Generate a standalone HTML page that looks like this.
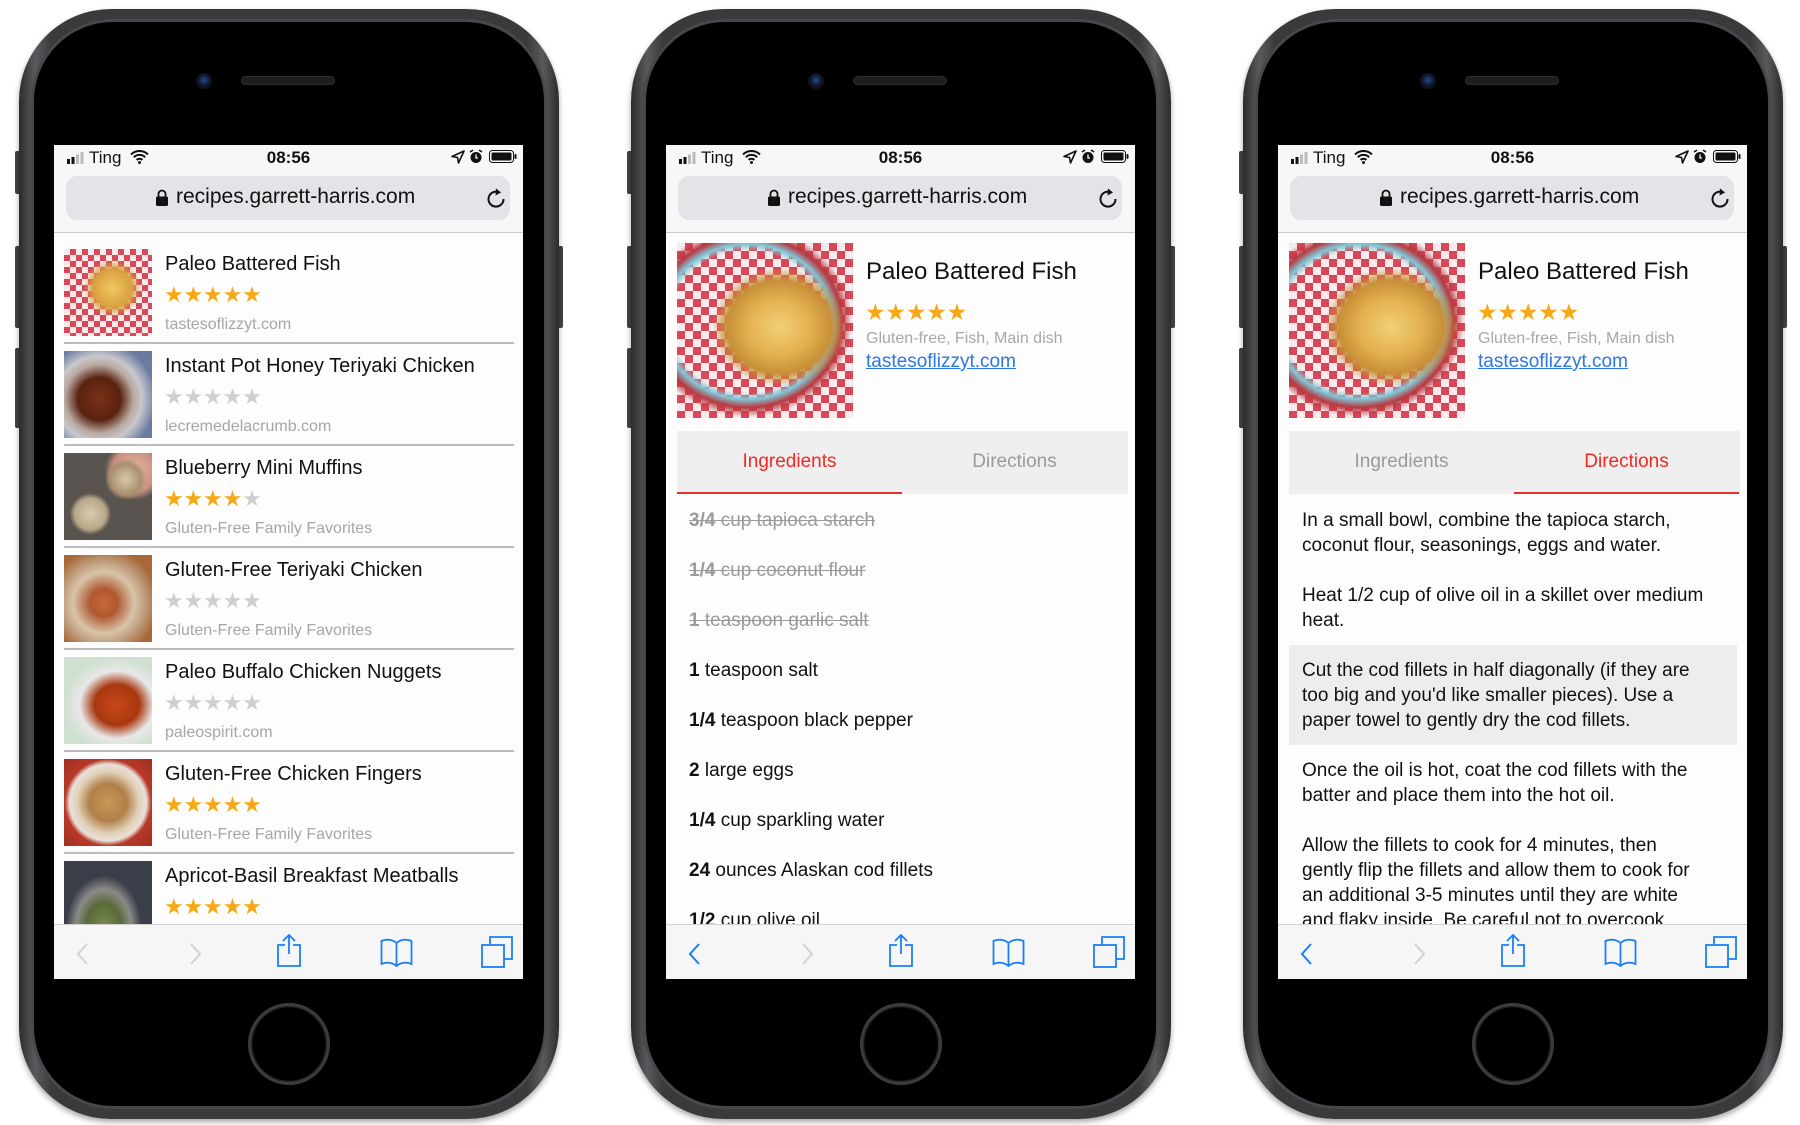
<!DOCTYPE html>
<html><head><meta charset="utf-8">
<style>
*{margin:0;padding:0;box-sizing:border-box}
body{width:1800px;height:1125px;background:#fff;position:relative;overflow:hidden;font-family:"Liberation Sans",Arial,sans-serif}
.phone{position:absolute;top:9px;width:540px;height:1110px}
.body{position:absolute;left:0;top:0;width:540px;height:1110px;border-radius:92px;background:linear-gradient(90deg,#2c2c2e,#5a5a5e 3%,#3a3a3c 6%,#3a3a3c 94%,#5a5a5e 97%,#2c2c2e);box-shadow:0 3px 6px rgba(0,0,0,.35)}
.bez{position:absolute;left:12px;top:10px;width:516px;height:1090px;border-radius:82px;background:#000;border:3px solid #48484c}
.btn{position:absolute;left:-4px;width:6px;background:#444;border-radius:2px}
.btnr{position:absolute;right:-4px;width:6px;background:#444;border-radius:2px}
.cam{position:absolute;left:177px;top:64px;width:16px;height:16px;border-radius:50%;background:radial-gradient(circle at 50% 45%,#2a4a8a 0,#0e1830 45%,#111 70%)}
.spk{position:absolute;left:222px;top:67px;width:94px;height:9px;border-radius:5px;background:#1e1e1e;border:1px solid #2e2e2e}
.home{position:absolute;left:229px;top:994px;width:82px;height:82px;border-radius:50%;border:3px solid #3c3c3e;box-shadow:inset 0 0 2px #777}
.scr{position:absolute;left:35px;top:136px;width:469px;height:834px;background:#fdfdfd;overflow:hidden}
.sb{position:absolute;left:0;top:0;width:469px;height:88px;background:#f7f7f7;border-bottom:1px solid #c8c8c8}
.abs{position:absolute;white-space:nowrap}
.url{position:absolute;left:12px;top:31px;width:444px;height:44px;border-radius:11px;background:#e3e3e8}
.tb{position:absolute;left:0;top:779px;width:469px;height:55px;background:#f6f6f7;border-top:1px solid #d0d0d0}
.t{font-size:20px;color:#111}
.st{font-family:"DejaVu Sans",sans-serif;font-size:22px;letter-spacing:-0.2px;color:#f6a914}
.g{color:#cfcfcf}
.src{font-size:16px;color:#a6a6a6}
.th{position:absolute;left:10px;width:88px;height:87px}
.dv{position:absolute;left:10px;width:450px;height:2px;background:#bdbdbd}
.ing{position:absolute;left:23px;font-size:19px;color:#111;white-space:nowrap;line-height:24px}
.ing.s{color:#9a9a9a;text-decoration:line-through}
.dir{position:absolute;left:11px;width:448px;padding:12.5px 0 12.5px 13px;font-size:19px;line-height:25px;color:#111;white-space:nowrap}
.fish{position:absolute;left:11px;top:98px;width:176px;height:175px;background:radial-gradient(ellipse at 58% 48%,#f2d078 0,#e4b050 22%,#c89038 36%,transparent 46%),radial-gradient(ellipse at 40% 45%,transparent 52%,#80c8d8 57%,#b83840 63%,transparent 70%),repeating-conic-gradient(#d84858 0 25%,#f6eaea 0 50%) 0 0/16px 16px}
</style></head><body>

<!-- PHONE 1 -->
<div class="phone" style="left:19px">
 <div class="btn" style="top:142px;height:43px"></div>
 <div class="btn" style="top:237px;height:82px"></div>
 <div class="btn" style="top:339px;height:80px"></div>
 <div class="btnr" style="top:237px;height:82px"></div>
 <div class="body"></div><div class="bez"></div>
 <div class="cam"></div><div class="spk"></div><div class="home"></div>
 <div class="scr">
  <div class="sb">
   <svg class="abs" style="left:13px;top:7px" width="18" height="12"><rect x="0" y="7" width="3" height="5" fill="#111"/><rect x="4.5" y="5" width="3" height="7" fill="#111"/><rect x="9" y="2.5" width="3" height="9.5" fill="#bbb"/><rect x="13.5" y="0" width="3" height="12" fill="#bbb"/></svg>
   <div class="abs" style="left:35px;top:3px;font-size:17px;color:#111">Ting</div>
   <svg class="abs" style="left:76px;top:5px" width="19" height="14" viewBox="0 0 19 14"><path d="M1 4.5a12 12 0 0 1 17 0M3.8 7.3a8 8 0 0 1 11.4 0M6.6 10a4 4 0 0 1 5.8 0" stroke="#111" stroke-width="2" fill="none"/><circle cx="9.5" cy="12.5" r="1.5" fill="#111"/></svg>
   <div class="abs" style="left:0;width:469px;text-align:center;top:3px;font-size:17px;font-weight:bold;color:#111">08:56</div>
   <svg class="abs" style="left:397px;top:5px" width="14" height="14"><path d="M13 1L1 6.5l5.5 1 1 5.5z" stroke="#111" stroke-width="1.6" fill="none" stroke-linejoin="round"/></svg>
   <svg class="abs" style="left:415px;top:4px" width="14" height="15"><circle cx="7" cy="8.5" r="5.5" fill="#111"/><path d="M1 3l3-2M13 3l-3-2" stroke="#111" stroke-width="1.6"/><path d="M7 5.5v3.5h2" stroke="#fff" stroke-width="1.3" fill="none"/></svg>
   <svg class="abs" style="left:435px;top:5px" width="28" height="13"><rect x="0.5" y="0.5" width="24" height="12" rx="3" fill="none" stroke="#111"/><rect x="2.5" y="2.5" width="20" height="8" rx="1.5" fill="#111"/><rect x="25.5" y="4" width="2" height="5" rx="1" fill="#111"/></svg>
   <div class="url">
    <svg class="abs" style="left:90px;top:13px" width="12" height="17"><path d="M2.5 8V5a3.5 3.5 0 0 1 7 0v3" stroke="#111" stroke-width="1.8" fill="none"/><rect x="0" y="7.5" width="12" height="9.5" rx="1.5" fill="#111"/></svg>
    <div class="abs" style="left:110px;top:9px;font-size:21px;color:#111">recipes.garrett-harris.com</div>
    <svg class="abs" style="left:420px;top:11px" width="20" height="22" viewBox="0 0 20 22"><path d="M13.5 5.5A7.5 7.5 0 1 0 17.5 12" stroke="#111" stroke-width="2" fill="none"/><path d="M10 1.5l5 4-5.5 3z" fill="#111"/></svg>
   </div>
  </div>

  <div class="th" style="top:104px;background:radial-gradient(ellipse at 55% 45%,#f0c860 0,#d9a040 28%,transparent 42%),repeating-conic-gradient(#d84858 0 25%,#f6eaea 0 50%) 0 0/12px 12px"></div>
  <div class="abs t" style="left:111px;top:108px">Paleo Battered Fish</div>
  <div class="abs st" style="left:110px;top:138px">★★★★★</div>
  <div class="abs src" style="left:111px;top:171px">tastesoflizzyt.com</div>
  <div class="dv" style="top:197px"></div>

  <div class="th" style="top:206px;background:radial-gradient(circle at 40% 55%,#7a3018 0,#5a2210 30%,#b8a8a0 48%,#c8c8cc 60%,#6a7aa0 80%)"></div>
  <div class="abs t" style="left:111px;top:210px">Instant Pot Honey Teriyaki Chicken</div>
  <div class="abs st g" style="left:110px;top:240px">★★★★★</div>
  <div class="abs src" style="left:111px;top:273px">lecremedelacrumb.com</div>
  <div class="dv" style="top:299px"></div>

  <div class="th" style="top:308px;background:radial-gradient(circle at 30% 70%,#d8ccb0 0,#b8a888 18%,transparent 24%),radial-gradient(circle at 70% 30%,#d8c8a8 0,#a89070 18%,transparent 24%),radial-gradient(circle at 80% 20%,#e8b8a0 0,#c89080 22%,transparent 30%),#5a5450"></div>
  <div class="abs t" style="left:111px;top:312px">Blueberry Mini Muffins</div>
  <div class="abs st" style="left:110px;top:342px">★★★★<span class="g">★</span></div>
  <div class="abs src" style="left:111px;top:375px">Gluten-Free Family Favorites</div>
  <div class="dv" style="top:401px"></div>

  <div class="th" style="top:410px;background:radial-gradient(circle at 45% 55%,#c86838 0,#b05830 20%,#d8c4a8 45%,#c0a080 60%,#a86838 80%)"></div>
  <div class="abs t" style="left:111px;top:414px">Gluten-Free Teriyaki Chicken</div>
  <div class="abs st g" style="left:110px;top:444px">★★★★★</div>
  <div class="abs src" style="left:111px;top:477px">Gluten-Free Family Favorites</div>
  <div class="dv" style="top:503px"></div>

  <div class="th" style="top:512px;background:radial-gradient(ellipse at 60% 55%,#c84818 0,#a83810 30%,#e8e8e8 50%,#d0e0d0 70%),#eee"></div>
  <div class="abs t" style="left:111px;top:516px">Paleo Buffalo Chicken Nuggets</div>
  <div class="abs st g" style="left:110px;top:546px">★★★★★</div>
  <div class="abs src" style="left:111px;top:579px">paleospirit.com</div>
  <div class="dv" style="top:605px"></div>

  <div class="th" style="top:614px;background:radial-gradient(circle at 50% 50%,#c89858 0,#b08048 30%,#e0d0b8 50%,#e8e0d8 62%,#b83828 70%,#a03020)"></div>
  <div class="abs t" style="left:111px;top:618px">Gluten-Free Chicken Fingers</div>
  <div class="abs st" style="left:110px;top:648px">★★★★★</div>
  <div class="abs src" style="left:111px;top:681px">Gluten-Free Family Favorites</div>
  <div class="dv" style="top:707px"></div>

  <div class="th" style="top:716px;background:radial-gradient(ellipse at 45% 75%,#7a8a50 0,#5a6a38 25%,#8a8a88 40%,#3a3e48 55%),#3a3e48"></div>
  <div class="abs t" style="left:111px;top:720px">Apricot-Basil Breakfast Meatballs</div>
  <div class="abs st" style="left:110px;top:750px">★★★★★</div>

  <div class="tb">
   <svg class="abs" style="left:22px;top:18px" width="13" height="22"><path d="M11 1L2 11l9 10" stroke="#d2d2d6" stroke-width="2" fill="none"/></svg>
   <svg class="abs" style="left:135px;top:18px" width="13" height="22"><path d="M2 1l9 10-9 10" stroke="#d2d2d6" stroke-width="2" fill="none"/></svg>
   <svg class="abs" style="left:223px;top:9px" width="24" height="33"><path d="M8 11H1v21h22V11h-7M12 1v19M6 7l6-6 6 6" stroke="#1a7ff7" stroke-width="1.8" fill="none"/></svg>
   <svg class="abs" style="left:326px;top:13px" width="33" height="30"><path d="M16.5 5C12 1 6 1 1.5 3v23c4.5-2 10.5-2 15 2 4.5-4 10.5-4 15-2V3C27 1 21 1 16.5 5zM16.5 5v23" stroke="#1a7ff7" stroke-width="1.8" fill="none"/></svg>
   <svg class="abs" style="left:427px;top:11px" width="32" height="32"><rect x="1" y="9" width="22" height="22" stroke="#1a7ff7" stroke-width="1.8" fill="none"/><path d="M9 9V1h22v22h-8" stroke="#1a7ff7" stroke-width="1.8" fill="none"/></svg>
  </div>
 </div>
</div>

<!-- PHONE 2 -->
<div class="phone" style="left:631px">
 <div class="btn" style="top:142px;height:43px"></div>
 <div class="btn" style="top:237px;height:82px"></div>
 <div class="btn" style="top:339px;height:80px"></div>
 <div class="btnr" style="top:237px;height:82px"></div>
 <div class="body"></div><div class="bez"></div>
 <div class="cam"></div><div class="spk"></div><div class="home"></div>
 <div class="scr">
  <div class="sb">
   <svg class="abs" style="left:13px;top:7px" width="18" height="12"><rect x="0" y="7" width="3" height="5" fill="#111"/><rect x="4.5" y="5" width="3" height="7" fill="#111"/><rect x="9" y="2.5" width="3" height="9.5" fill="#bbb"/><rect x="13.5" y="0" width="3" height="12" fill="#bbb"/></svg>
   <div class="abs" style="left:35px;top:3px;font-size:17px;color:#111">Ting</div>
   <svg class="abs" style="left:76px;top:5px" width="19" height="14" viewBox="0 0 19 14"><path d="M1 4.5a12 12 0 0 1 17 0M3.8 7.3a8 8 0 0 1 11.4 0M6.6 10a4 4 0 0 1 5.8 0" stroke="#111" stroke-width="2" fill="none"/><circle cx="9.5" cy="12.5" r="1.5" fill="#111"/></svg>
   <div class="abs" style="left:0;width:469px;text-align:center;top:3px;font-size:17px;font-weight:bold;color:#111">08:56</div>
   <svg class="abs" style="left:397px;top:5px" width="14" height="14"><path d="M13 1L1 6.5l5.5 1 1 5.5z" stroke="#111" stroke-width="1.6" fill="none" stroke-linejoin="round"/></svg>
   <svg class="abs" style="left:415px;top:4px" width="14" height="15"><circle cx="7" cy="8.5" r="5.5" fill="#111"/><path d="M1 3l3-2M13 3l-3-2" stroke="#111" stroke-width="1.6"/><path d="M7 5.5v3.5h2" stroke="#fff" stroke-width="1.3" fill="none"/></svg>
   <svg class="abs" style="left:435px;top:5px" width="28" height="13"><rect x="0.5" y="0.5" width="24" height="12" rx="3" fill="none" stroke="#111"/><rect x="2.5" y="2.5" width="20" height="8" rx="1.5" fill="#111"/><rect x="25.5" y="4" width="2" height="5" rx="1" fill="#111"/></svg>
   <div class="url">
    <svg class="abs" style="left:90px;top:13px" width="12" height="17"><path d="M2.5 8V5a3.5 3.5 0 0 1 7 0v3" stroke="#111" stroke-width="1.8" fill="none"/><rect x="0" y="7.5" width="12" height="9.5" rx="1.5" fill="#111"/></svg>
    <div class="abs" style="left:110px;top:9px;font-size:21px;color:#111">recipes.garrett-harris.com</div>
    <svg class="abs" style="left:420px;top:11px" width="20" height="22" viewBox="0 0 20 22"><path d="M13.5 5.5A7.5 7.5 0 1 0 17.5 12" stroke="#111" stroke-width="2" fill="none"/><path d="M10 1.5l5 4-5.5 3z" fill="#111"/></svg>
   </div>
  </div>
  <div class="fish"></div>
  <div class="abs" style="left:200px;top:113px;font-size:24px;color:#111">Paleo Battered Fish</div>
  <div class="abs st" style="left:199px;top:155px;font-size:23px">★★★★★</div>
  <div class="abs" style="left:200px;top:185px;font-size:16px;color:#a8a8a8">Gluten-free, Fish, Main dish</div>
  <div class="abs" style="left:200px;top:206px;font-size:19px;color:#2b78e4;text-decoration:underline">tastesoflizzyt.com</div>
  <div class="abs" style="left:11px;top:286px;width:451px;height:63px;background:#efefef"></div>
  <div class="abs" style="left:11px;top:347px;width:225px;height:2px;background:#e8302e"></div>
  <div class="abs" style="left:11px;top:306px;width:225px;text-align:center;font-size:19px;color:#f02a20">Ingredients</div>
  <div class="abs" style="left:236px;top:306px;width:225px;text-align:center;font-size:19px;color:#9a9a9a">Directions</div>
  <div class="ing s" style="top:364px"><b>3/4</b> cup tapioca starch</div>
  <div class="ing s" style="top:414px"><b>1/4</b> cup coconut flour</div>
  <div class="ing s" style="top:464px"><b>1</b> teaspoon garlic salt</div>
  <div class="ing" style="top:514px"><b>1</b> teaspoon salt</div>
  <div class="ing" style="top:564px"><b>1/4</b> teaspoon black pepper</div>
  <div class="ing" style="top:614px"><b>2</b> large eggs</div>
  <div class="ing" style="top:664px"><b>1/4</b> cup sparkling water</div>
  <div class="ing" style="top:714px"><b>24</b> ounces Alaskan cod fillets</div>
  <div class="ing" style="top:764px"><b>1/2</b> cup olive oil</div>
  <div class="tb">
   <svg class="abs" style="left:22px;top:18px" width="13" height="22"><path d="M11 1L2 11l9 10" stroke="#1a7ff7" stroke-width="2" fill="none"/></svg>
   <svg class="abs" style="left:135px;top:18px" width="13" height="22"><path d="M2 1l9 10-9 10" stroke="#d2d2d6" stroke-width="2" fill="none"/></svg>
   <svg class="abs" style="left:223px;top:9px" width="24" height="33"><path d="M8 11H1v21h22V11h-7M12 1v19M6 7l6-6 6 6" stroke="#1a7ff7" stroke-width="1.8" fill="none"/></svg>
   <svg class="abs" style="left:326px;top:13px" width="33" height="30"><path d="M16.5 5C12 1 6 1 1.5 3v23c4.5-2 10.5-2 15 2 4.5-4 10.5-4 15-2V3C27 1 21 1 16.5 5zM16.5 5v23" stroke="#1a7ff7" stroke-width="1.8" fill="none"/></svg>
   <svg class="abs" style="left:427px;top:11px" width="32" height="32"><rect x="1" y="9" width="22" height="22" stroke="#1a7ff7" stroke-width="1.8" fill="none"/><path d="M9 9V1h22v22h-8" stroke="#1a7ff7" stroke-width="1.8" fill="none"/></svg>
  </div>
 </div>
</div>

<!-- PHONE 3 -->
<div class="phone" style="left:1243px">
 <div class="btn" style="top:142px;height:43px"></div>
 <div class="btn" style="top:237px;height:82px"></div>
 <div class="btn" style="top:339px;height:80px"></div>
 <div class="btnr" style="top:237px;height:82px"></div>
 <div class="body"></div><div class="bez"></div>
 <div class="cam"></div><div class="spk"></div><div class="home"></div>
 <div class="scr">
  <div class="sb">
   <svg class="abs" style="left:13px;top:7px" width="18" height="12"><rect x="0" y="7" width="3" height="5" fill="#111"/><rect x="4.5" y="5" width="3" height="7" fill="#111"/><rect x="9" y="2.5" width="3" height="9.5" fill="#bbb"/><rect x="13.5" y="0" width="3" height="12" fill="#bbb"/></svg>
   <div class="abs" style="left:35px;top:3px;font-size:17px;color:#111">Ting</div>
   <svg class="abs" style="left:76px;top:5px" width="19" height="14" viewBox="0 0 19 14"><path d="M1 4.5a12 12 0 0 1 17 0M3.8 7.3a8 8 0 0 1 11.4 0M6.6 10a4 4 0 0 1 5.8 0" stroke="#111" stroke-width="2" fill="none"/><circle cx="9.5" cy="12.5" r="1.5" fill="#111"/></svg>
   <div class="abs" style="left:0;width:469px;text-align:center;top:3px;font-size:17px;font-weight:bold;color:#111">08:56</div>
   <svg class="abs" style="left:397px;top:5px" width="14" height="14"><path d="M13 1L1 6.5l5.5 1 1 5.5z" stroke="#111" stroke-width="1.6" fill="none" stroke-linejoin="round"/></svg>
   <svg class="abs" style="left:415px;top:4px" width="14" height="15"><circle cx="7" cy="8.5" r="5.5" fill="#111"/><path d="M1 3l3-2M13 3l-3-2" stroke="#111" stroke-width="1.6"/><path d="M7 5.5v3.5h2" stroke="#fff" stroke-width="1.3" fill="none"/></svg>
   <svg class="abs" style="left:435px;top:5px" width="28" height="13"><rect x="0.5" y="0.5" width="24" height="12" rx="3" fill="none" stroke="#111"/><rect x="2.5" y="2.5" width="20" height="8" rx="1.5" fill="#111"/><rect x="25.5" y="4" width="2" height="5" rx="1" fill="#111"/></svg>
   <div class="url">
    <svg class="abs" style="left:90px;top:13px" width="12" height="17"><path d="M2.5 8V5a3.5 3.5 0 0 1 7 0v3" stroke="#111" stroke-width="1.8" fill="none"/><rect x="0" y="7.5" width="12" height="9.5" rx="1.5" fill="#111"/></svg>
    <div class="abs" style="left:110px;top:9px;font-size:21px;color:#111">recipes.garrett-harris.com</div>
    <svg class="abs" style="left:420px;top:11px" width="20" height="22" viewBox="0 0 20 22"><path d="M13.5 5.5A7.5 7.5 0 1 0 17.5 12" stroke="#111" stroke-width="2" fill="none"/><path d="M10 1.5l5 4-5.5 3z" fill="#111"/></svg>
   </div>
  </div>
  <div class="fish"></div>
  <div class="abs" style="left:200px;top:113px;font-size:24px;color:#111">Paleo Battered Fish</div>
  <div class="abs st" style="left:199px;top:155px;font-size:23px">★★★★★</div>
  <div class="abs" style="left:200px;top:185px;font-size:16px;color:#a8a8a8">Gluten-free, Fish, Main dish</div>
  <div class="abs" style="left:200px;top:206px;font-size:19px;color:#2b78e4;text-decoration:underline">tastesoflizzyt.com</div>
  <div class="abs" style="left:11px;top:286px;width:451px;height:63px;background:#efefef"></div>
  <div class="abs" style="left:236px;top:347px;width:225px;height:2px;background:#e8302e"></div>
  <div class="abs" style="left:11px;top:306px;width:225px;text-align:center;font-size:19px;color:#9a9a9a">Ingredients</div>
  <div class="abs" style="left:236px;top:306px;width:225px;text-align:center;font-size:19px;color:#f02a20">Directions</div>
  <div class="dir" style="top:350px">In a small bowl, combine the tapioca starch,<br>coconut flour, seasonings, eggs and water.</div>
  <div class="dir" style="top:425px">Heat 1/2 cup of olive oil in a skillet over medium<br>heat.</div>
  <div class="dir" style="top:500px;background:#ededed">Cut the cod fillets in half diagonally (if they are<br>too big and you'd like smaller pieces). Use a<br>paper towel to gently dry the cod fillets.</div>
  <div class="dir" style="top:600px">Once the oil is hot, coat the cod fillets with the<br>batter and place them into the hot oil.</div>
  <div class="dir" style="top:675px">Allow the fillets to cook for 4 minutes, then<br>gently flip the fillets and allow them to cook for<br>an additional 3-5 minutes until they are white<br>and flaky inside. Be careful not to overcook.</div>
  <div class="tb">
   <svg class="abs" style="left:22px;top:18px" width="13" height="22"><path d="M11 1L2 11l9 10" stroke="#1a7ff7" stroke-width="2" fill="none"/></svg>
   <svg class="abs" style="left:135px;top:18px" width="13" height="22"><path d="M2 1l9 10-9 10" stroke="#d2d2d6" stroke-width="2" fill="none"/></svg>
   <svg class="abs" style="left:223px;top:9px" width="24" height="33"><path d="M8 11H1v21h22V11h-7M12 1v19M6 7l6-6 6 6" stroke="#1a7ff7" stroke-width="1.8" fill="none"/></svg>
   <svg class="abs" style="left:326px;top:13px" width="33" height="30"><path d="M16.5 5C12 1 6 1 1.5 3v23c4.5-2 10.5-2 15 2 4.5-4 10.5-4 15-2V3C27 1 21 1 16.5 5zM16.5 5v23" stroke="#1a7ff7" stroke-width="1.8" fill="none"/></svg>
   <svg class="abs" style="left:427px;top:11px" width="32" height="32"><rect x="1" y="9" width="22" height="22" stroke="#1a7ff7" stroke-width="1.8" fill="none"/><path d="M9 9V1h22v22h-8" stroke="#1a7ff7" stroke-width="1.8" fill="none"/></svg>
  </div>
 </div>
</div>
</body></html>
